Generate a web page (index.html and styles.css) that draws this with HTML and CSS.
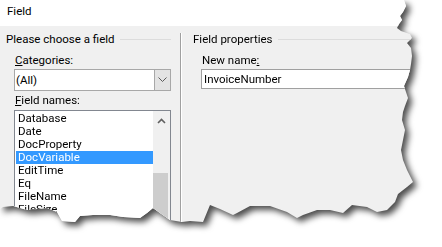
FILE: index.html
```html
<!DOCTYPE html>
<html lang="en">
<head>
    <meta charset="UTF-8">
    <meta name="viewport" content="width=device-width, initial-scale=1.0">
    <title>Field</title>
    <link rel="stylesheet" href="styles.css">
</head>
<body>

    <!-- Torn screenshot of the Word "Field" dialog -->
    <div class="page">
        <div class="dialog">
            <div class="titlebar">Field</div>

            <div class="dialog-body">
                <!-- Left: choose a field -->
                <div class="panel panel-left">
                    <div class="group-title">
                        <span>Please choose a field</span>
                        <span class="rule"></span>
                    </div>
                    <div class="group">
                        <div class="label"><u>C</u>ategories:</div>
                        <div class="combo">
                            <div class="combo-text">(All)</div>
                            <div class="combo-btn">
                                <svg width="9" height="6" viewBox="0 0 9 6"><polyline points="0.5,0.5 4.5,4.5 8.5,0.5" fill="none" stroke="#5a5a5a" stroke-width="1"/></svg>
                            </div>
                        </div>
                        <div class="label label-gap"><u>F</u>ield names:</div>
                        <div class="listbox">
                            <div class="list-items">
                                <div class="list-item">Database</div>
                                <div class="list-item">Date</div>
                                <div class="list-item">DocProperty</div>
                                <div class="list-item selected">DocVariable</div>
                                <div class="list-item">EditTime</div>
                                <div class="list-item">Eq</div>
                                <div class="list-item">FileName</div>
                                <div class="list-item">FileSize</div>
                            </div>
                            <div class="scrollbar">
                                <div class="scroll-up">
                                    <svg width="9" height="6" viewBox="0 0 9 6"><polyline points="1,5 4.5,1.5 8,5" fill="none" stroke="#606060" stroke-width="1.6"/></svg>
                                </div>
                                <div class="scroll-thumb"></div>
                            </div>
                        </div>
                    </div>
                </div>

                <div class="separator"></div>

                <!-- Right: field properties -->
                <div class="panel panel-right">
                    <div class="group-title">
                        <span>Field properties</span>
                        <span class="rule"></span>
                    </div>
                    <div class="group">
                        <div class="label">New name<u>:</u></div>
                        <div class="textbox">InvoiceNumber</div>
                    </div>
                </div>
            </div>
        </div>
    </div>

</body>
</html>
```

FILE: styles.css
```css
body {
    margin: 0;
    padding: 0;
    background-color: #fff;
    font-family: Roboto, "Liberation Sans", sans-serif;
    font-size: 11.5px;
    color: #000;
}

.page {
    width: 442px;
    height: 247px;
    overflow: hidden;
    filter: drop-shadow(4px 4px 3px rgba(0, 0, 0, 0.7));
}

.dialog {
    width: 442px;
    height: 230px;
    background-color: #f0f0f0;
    clip-path: polygon(
        0 0, 404px 0, 406px 6px, 403px 12px, 400px 16px, 402px 20px, 399px 24px,
        397px 28px, 401px 31px, 410px 34px, 412px 38px, 407px 43px, 411px 48px,
        412px 56px, 411px 64px, 410px 70px, 408px 77px, 404px 86px, 406px 92px,
        408px 98px, 405px 106px, 403px 112px, 402px 120px, 405px 130px, 403px 140px,
        401px 150px, 403px 160px, 407px 170px, 413px 182px, 407px 187px, 398px 194px,
        395px 202px, 387px 210px, 377px 212px, 367px 207px, 352px 205px, 343px 213px,
        330px 210px, 317px 210px, 303px 215px, 297px 218px, 287px 212px, 270px 206px,
        250px 206px, 237px 213px, 233px 215px, 220px 209px, 210px 205px, 203px 222px,
        190px 221px, 182px 222px, 170px 220px, 160px 213px, 153px 208px, 147px 213px,
        140px 218px, 123px 217px, 110px 215px, 93px 215px, 80px 216px, 75px 222px,
        62px 221px, 57px 212px, 47px 208px, 27px 210px, 13px 206px, 3px 207px, 0 209px
    );
}

.titlebar {
    height: 26px;
    box-sizing: border-box;
    padding: 4px 7px 0;
    line-height: 14px;
    background-color: #fff;
}

.dialog-body {
    display: flex;
    height: 204px;
}

.panel {
    box-sizing: border-box;
    padding-top: 6px;
}

.panel-left {
    width: 180px;
    padding-left: 6px;
    padding-right: 9px;
}

.panel-right {
    flex: 1;
    padding-left: 11px;
}

.separator {
    width: 1px;
    margin-top: 7px;
    background-color: #a0a0a0;
    border-right: 1px solid #fff;
}

.group-title {
    display: flex;
    align-items: center;
    height: 14px;
    line-height: 14px;
    white-space: nowrap;
    margin-bottom: 7px;
}

.group-title .rule {
    flex: 1;
    height: 1px;
    margin-left: 5px;
    background-color: #dcdcdc;
}

.group {
    padding-left: 8px;
}

.label {
    line-height: 14px;
    padding-left: 1px;
}

.label-gap {
    margin-top: 2px;
}

.combo {
    display: flex;
    height: 22px;
    margin-top: 2px;
    box-sizing: border-box;
    border: 1px solid #a8a8a8;
    background-color: #fff;
}

.combo-text {
    flex: 1;
    padding-left: 1px;
    line-height: 20px;
}

.combo-btn {
    width: 16px;
    box-sizing: border-box;
    border-left: 1px solid #a8a8a8;
    background-color: #e3e3e3;
    display: flex;
    align-items: center;
    justify-content: center;
}

.listbox {
    display: flex;
    height: 130px;
    margin-top: 3px;
    box-sizing: border-box;
    border: 1px solid #828790;
    background-color: #fff;
}

.list-items {
    flex: 1;
    padding: 1px 0 0 1px;
}

.list-item {
    height: 13px;
    line-height: 13px;
    padding-left: 2px;
    white-space: nowrap;
}

.list-item.selected {
    background-color: #3399ff;
    color: #fff;
}

.scrollbar {
    width: 17px;
    background-color: #f0f0f0;
}

.scroll-up {
    height: 20px;
    display: flex;
    align-items: center;
    justify-content: center;
}

.scroll-thumb {
    width: 15px;
    height: 80px;
    margin-top: 42px;
    background-color: #cdcdcd;
}

.textbox {
    width: 230px;
    height: 20px;
    margin-top: 2px;
    box-sizing: border-box;
    border: 1px solid #a0a0a0;
    background-color: #fff;
    padding-left: 2px;
    line-height: 18px;
}
```
